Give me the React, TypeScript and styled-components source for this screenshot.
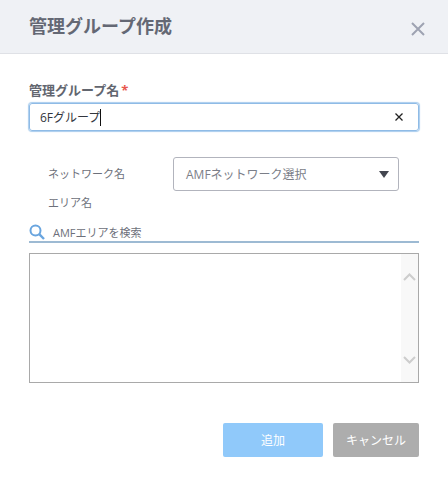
import { createGlobalStyle } from "styled-components";
import styled from "styled-components";

const GlobalStyle = createGlobalStyle`
  html, body {
    margin: 0;
    padding: 0;
    background: #fff;
  }
  * {
    box-sizing: border-box;
  }
  body {
    font-family: "Open Sans", "Noto Sans CJK JP", sans-serif;
  }
`

const Dialog = styled.div`
  width: 448px;
  height: 481px;
  display: flex;
  flex-direction: column;
  background: #fff;
  overflow: hidden;
`

const Header = styled.div`
  height: 54px;
  flex: none;
  display: flex;
  justify-content: space-between;
  padding: 14px 22px 0 29px;
  background: #eff1f5;
  border-bottom: 1px solid #dfe1e6;
`

const Title = styled.h1`
  margin: 0;
  font-size: 18px;
  line-height: 24px;
  font-weight: 700;
  color: #646874;
`

const CloseButton = styled.button`
  width: 16px;
  height: 16px;
  margin-top: 7px;
  padding: 0;
  border: none;
  background: none;
  color: #9ea3b2;
  display: block;
`

const Body = styled.div`
  flex: 1;
  display: flex;
  flex-direction: column;
  padding: 28px 29px 0;
`

const FieldLabel = styled.label`
  display: block;
  height: 21px;
  font-size: 13px;
  line-height: 17px;
  font-weight: 700;
  color: #62666f;
`

const Required = styled.span`
  margin-left: 2px;
  color: #e8574d;
`

const NameField = styled.div`
  width: 390px;
  height: 28px;
  display: flex;
  align-items: center;
  justify-content: space-between;
  padding: 0 15px 0 10px;
  border: 1px solid #8fbbe6;
  border-radius: 3px;
  box-shadow: 0 0 1px 1px #a9cdee;
  font-size: 12px;
  color: #33363d;
`

const NameValue = styled.span`
  display: flex;
  align-items: center;
`

const Caret = styled.span`
  width: 1px;
  height: 17px;
  background: #111;
`

const ClearIcon = styled.svg`
  width: 8px;
  height: 8px;
  color: #222;
`

const NetworkRow = styled.div`
  display: flex;
  align-items: flex-start;
  margin-top: 26px;
  padding-left: 19px;
`

const RowLabels = styled.div`
  width: 125px;
  padding-top: 8px;
  display: flex;
  flex-direction: column;
  gap: 12px;
`

const RowLabel = styled.div`
  font-size: 11px;
  line-height: 17px;
  color: #6d707a;
`

const Select = styled.div`
  width: 226px;
  height: 34px;
  display: flex;
  align-items: center;
  justify-content: space-between;
  padding: 0 9px 0 12px;
  border: 1px solid #b2b4bd;
  border-radius: 3px;
  font-size: 12px;
  color: #7b7e88;
`

const SelectArrow = styled.span`
  width: 0;
  height: 0;
  border-left: 5px solid transparent;
  border-right: 5px solid transparent;
  border-top: 7px solid #43464f;
`

const SearchBar = styled.div`
  width: 390px;
  height: 20px;
  margin-top: 12px;
  display: flex;
  align-items: center;
  gap: 8px;
  border-bottom: 2px solid #9dbad3;
  font-size: 11px;
  color: #6d707a;
`

const SearchIcon = styled.svg`
  width: 16px;
  height: 16px;
  color: #69a5df;
  flex: none;
`

const AreaList = styled.div`
  width: 390px;
  height: 130px;
  margin-top: 10px;
  display: flex;
  justify-content: flex-end;
  border: 1px solid #a9a9a9;
`

const ScrollBar = styled.div`
  width: 17px;
  display: flex;
  flex-direction: column;
  justify-content: space-between;
  align-items: center;
  padding: 19px 0 18px;
  background: #f8f8f8;
  color: #cdcdcd;
`

const ScrollArrow = styled.svg`
  width: 13px;
  height: 8px;
`

const Footer = styled.div`
  width: 390px;
  margin-top: 40px;
  display: flex;
  justify-content: flex-end;
  gap: 10px;
`

const ActionButton = styled.button<{ $tone: "primary" | "cancel" }>`
  width: ${(p) => (p.$tone === "primary" ? "100px" : "86px")};
  height: 34px;
  padding: 0;
  border: none;
  border-radius: 2px;
  background: ${(p) => (p.$tone === "primary" ? "#90c9fa" : "#adadad")};
  color: #fff;
  font-family: inherit;
  font-size: 12px;
`

export default function App() {
  return (
    <>
      <GlobalStyle />
      <Dialog>
        <Header>
          <Title>管理グループ作成</Title>
          <CloseButton aria-label="閉じる">
            <svg width="16" height="16" viewBox="0 0 16 16">
              <path d="M2 2 L14 14 M14 2 L2 14" stroke="currentColor" strokeWidth="2" fill="none" />
            </svg>
          </CloseButton>
        </Header>
        <Body>
          <FieldLabel>
            管理グループ名<Required>*</Required>
          </FieldLabel>
          <NameField>
            <NameValue>
              6Fグループ
              <Caret />
            </NameValue>
            <ClearIcon viewBox="0 0 8 8">
              <path d="M0.5 0.5 L7.5 7.5 M7.5 0.5 L0.5 7.5" stroke="currentColor" strokeWidth="1.3" fill="none" />
            </ClearIcon>
          </NameField>
          <NetworkRow>
            <RowLabels>
              <RowLabel>ネットワーク名</RowLabel>
              <RowLabel>エリア名</RowLabel>
            </RowLabels>
            <Select>
              AMFネットワーク選択
              <SelectArrow />
            </Select>
          </NetworkRow>
          <SearchBar>
            <SearchIcon viewBox="0 0 16 16">
              <circle cx="6.5" cy="6.5" r="5" stroke="currentColor" strokeWidth="2" fill="none" />
              <path d="M10.2 10.2 L15 15" stroke="currentColor" strokeWidth="2.4" fill="none" />
            </SearchIcon>
            AMFエリアを検索
          </SearchBar>
          <AreaList>
            <ScrollBar>
              <ScrollArrow viewBox="0 0 13 8">
                <path d="M1 7 L6.5 1.5 L12 7" stroke="currentColor" strokeWidth="2" fill="none" />
              </ScrollArrow>
              <ScrollArrow viewBox="0 0 13 8">
                <path d="M1 1 L6.5 6.5 L12 1" stroke="currentColor" strokeWidth="2" fill="none" />
              </ScrollArrow>
            </ScrollBar>
          </AreaList>
          <Footer>
            <ActionButton $tone="primary">追加</ActionButton>
            <ActionButton $tone="cancel">キャンセル</ActionButton>
          </Footer>
        </Body>
      </Dialog>
    </>
  );
}
